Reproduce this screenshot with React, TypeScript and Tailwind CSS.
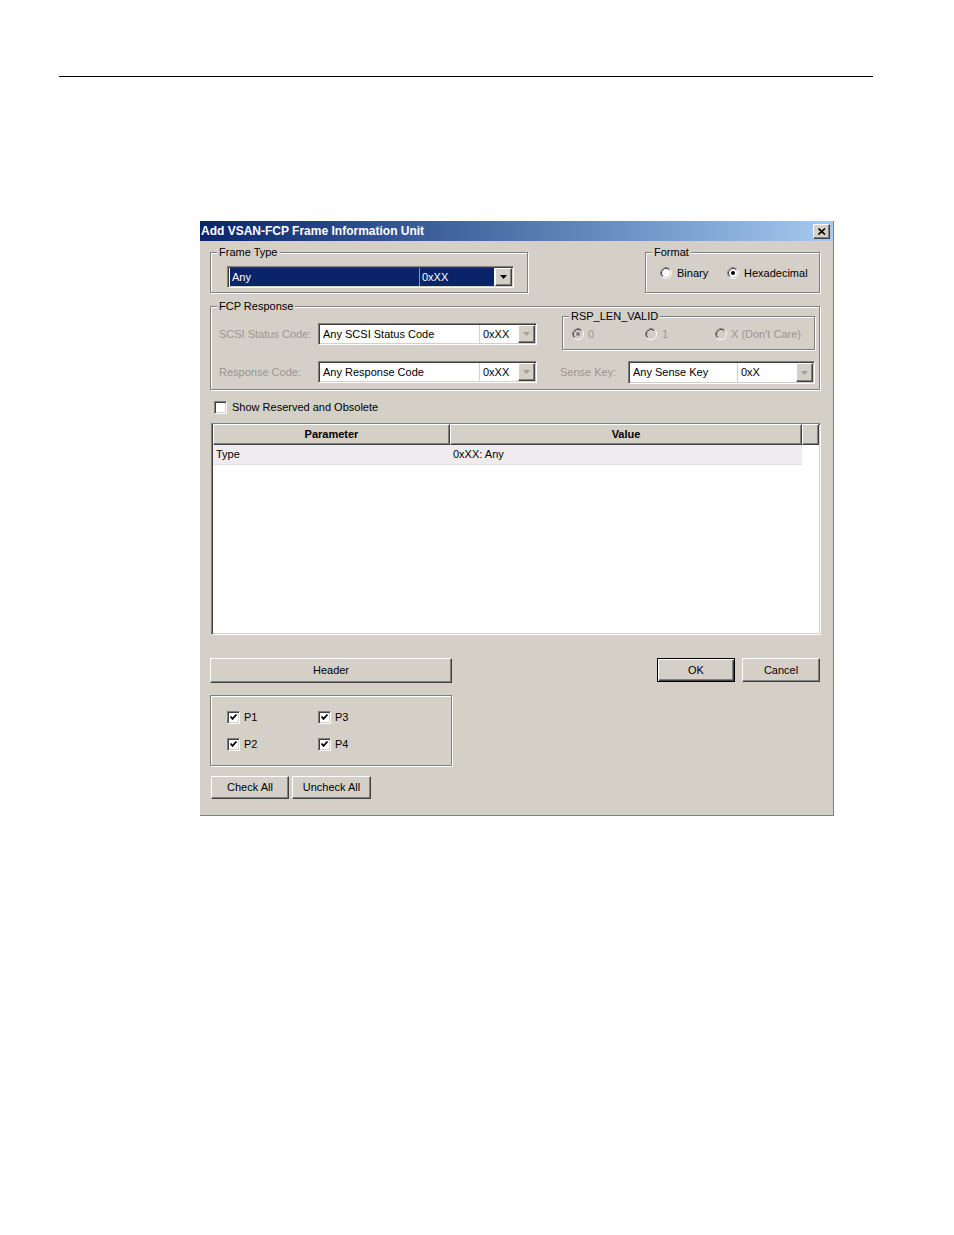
import React from "react";

const F = "font-['Liberation_Sans',Arial,sans-serif]";
const raised =
  "border border-t-white border-l-white border-r-[#404040] border-b-[#404040] shadow-[inset_-1px_-1px_0_#808080]";
const sunken =
  "border border-t-[#808080] border-l-[#808080] border-r-white border-b-white shadow-[inset_1px_1px_0_#404040,inset_-1px_-1px_0_#d4d0c8]";
const etched = "border border-[#808080] shadow-[inset_1px_1px_0_#fff,1px_1px_0_#fff]";
const dis = "text-[#9a968e]";

function Group({
  label,
  className,
  children,
}: {
  label?: string;
  className: string;
  children?: React.ReactNode;
}) {
  return (
    <div className={`relative ${etched} ${className}`}>
      {label && (
        <span className="absolute left-[6px] top-[-8px] bg-[#d4d0c8] px-[2px] text-[11px] leading-[14px] text-black">
          {label}
        </span>
      )}
      {children}
    </div>
  );
}

function Arrow({ disabled }: { disabled?: boolean }) {
  return (
    <div className={`${raised} flex w-[17px] shrink-0 items-center justify-center bg-[#d4d0c8]`}>
      <svg width="7" height="4" viewBox="0 0 7 4">
        <polygon points="0,0 7,0 3.5,4" fill={disabled ? "#a0a0a0" : "#000"} />
      </svg>
    </div>
  );
}

function Combo({
  className,
  col1,
  text,
  code,
  selected,
  disabled,
}: {
  className: string;
  col1: string;
  text: string;
  code: string;
  selected?: boolean;
  disabled?: boolean;
}) {
  if (selected) {
    return (
      <div className={`${sunken} flex bg-white py-[1px] pl-[2px] pr-[1px] ${className}`}>
        <div className="flex w-[264px] bg-[#0a246a] text-white">
          <div className={`${col1} flex items-center border-r border-[#8a94b8] pl-[2px]`}>{text}</div>
          <div className="flex flex-1 items-center pl-[2px]">{code}</div>
        </div>
        <div className="flex-1" />
        <Arrow />
      </div>
    );
  }
  return (
    <div className={`${sunken} flex bg-white py-[1px] pl-[1px] pr-[1px] ${className}`}>
      <div className={`${col1} flex items-center border-r border-[#d4d0c8] pl-[3px]`}>{text}</div>
      <div className="flex flex-1 items-center pl-[3px]">{code}</div>
      <Arrow disabled={disabled} />
    </div>
  );
}

function Radio({ checked, disabled }: { checked?: boolean; disabled?: boolean }) {
  return (
    <svg width="12" height="12" viewBox="0 0 12 12" className="shrink-0">
      <circle cx="6" cy="6" r="5.5" fill="none" stroke="#fff" />
      <path d="M9.89 2.11 A5.5 5.5 0 0 0 2.11 9.89" fill="none" stroke="#808080" />
      <circle cx="6" cy="6" r="4.5" fill={disabled ? "#d4d0c8" : "#fff"} stroke="#d4d0c8" />
      <path d="M9.18 2.82 A4.5 4.5 0 0 0 2.82 9.18" fill="none" stroke="#404040" />
      {checked && <circle cx="6" cy="6" r="2" fill={disabled ? "#808080" : "#000"} />}
    </svg>
  );
}

function Check({ checked }: { checked?: boolean }) {
  return (
    <div className={`${sunken} flex h-[13px] w-[13px] shrink-0 items-center justify-center bg-white`}>
      {checked && (
        <svg width="9" height="9" viewBox="0 0 9 9">
          <polyline points="1.5,3.5 3.5,5.8 7.5,1.5" fill="none" stroke="#000" strokeWidth="1.8" />
        </svg>
      )}
    </div>
  );
}

export default function App() {
  return (
    <div className={`h-[1235px] w-[954px] bg-white ${F} text-[11px] text-black`}>
      <div className="ml-[59px] h-[76px]" />
      <div className="ml-[59px] h-px w-[814px] bg-black" />
      <div className="ml-[200px] mt-[144px] h-[595px] w-[634px] border-b border-r border-[#808080] bg-[#d4d0c8]">
        {/* title bar */}
        <div className="flex h-[20px] items-center justify-between bg-linear-to-r from-[#0a246a] to-[#a6caf0] pl-[1px] pr-[3px]">
          <span className="text-[12px] font-bold text-white">Add VSAN-FCP Frame Information Unit</span>
          <div className={`${raised} flex h-[15px] w-[17px] items-center justify-center bg-[#d4d0c8]`}>
            <svg width="8" height="7" viewBox="0 0 8 7">
              <path d="M0.5 0.5 L7 6.5 M7 0.5 L0.5 6.5" stroke="#000" strokeWidth="1.6" />
            </svg>
          </div>
        </div>

        <div className="pl-[10px]">
          {/* row 1 */}
          <div className="mt-[11px] flex w-[610px] justify-between">
            <Group label="Frame Type" className="h-[41px] w-[318px] pl-[16px] pt-[13px]">
              <Combo className="h-[22px] w-[287px]" col1="w-[190px]" text="Any" code="0xXX" selected />
            </Group>
            <Group label="Format" className="h-[41px] w-[175px] pl-[14px] pt-[14px]">
              <div className="flex h-[12px] items-center">
                <div className="flex w-[67px] items-center">
                  <Radio />
                  <span className="ml-[5px]">Binary</span>
                </div>
                <div className="flex items-center">
                  <Radio checked />
                  <span className="ml-[5px]">Hexadecimal</span>
                </div>
              </div>
            </Group>
          </div>

          {/* FCP Response */}
          <Group label="FCP Response" className="mt-[13px] flex h-[84px] w-[610px]">
            <div className="pl-[8px]">
              <div className="mt-[16px] flex h-[22px] items-center">
                <span className={`w-[99px] ${dis}`}>SCSI Status Code:</span>
                <Combo className="h-[22px] w-[219px]" col1="w-[160px]" text="Any SCSI Status Code" code="0xXX" disabled />
              </div>
              <div className="mt-[16px] flex h-[22px] items-center">
                <span className={`w-[99px] ${dis}`}>Response Code:</span>
                <Combo className="h-[22px] w-[219px]" col1="w-[160px]" text="Any Response Code" code="0xXX" disabled />
              </div>
            </div>
            <div className="ml-[23px]">
              <Group label="RSP_LEN_VALID" className="ml-[2px] mt-[9px] h-[34px] w-[253px] pl-[9px] pt-[11px]">
                <div className={`flex h-[12px] items-center ${dis}`}>
                  <div className="flex w-[73px] items-center">
                    <Radio checked disabled />
                    <span className="ml-[4px]">0</span>
                  </div>
                  <div className="flex w-[70px] items-center">
                    <Radio disabled />
                    <span className="ml-[5px]">1</span>
                  </div>
                  <div className="flex items-center">
                    <Radio disabled />
                    <span className="ml-[4px]">X (Don't Care)</span>
                  </div>
                </div>
              </Group>
              <div className="mt-[11px] flex h-[23px] items-center">
                <span className={`w-[68px] ${dis}`}>Sense Key:</span>
                <Combo className="h-[23px] w-[187px]" col1="w-[108px]" text="Any Sense Key" code="0xX" disabled />
              </div>
            </div>
          </Group>

          {/* show reserved */}
          <div className="ml-[4px] mt-[11px] flex h-[13px] items-center">
            <Check />
            <span className="ml-[5px]">Show Reserved and Obsolete</span>
          </div>

          {/* table */}
          <div className={`${sunken} ml-[1px] mt-[9px] h-[212px] w-[610px] bg-white px-[1px] pb-[1px]`}>
            <div className="flex h-[21px] bg-[#d4d0c8] font-bold">
              <div className={`${raised} flex w-[237px] items-center justify-center`}>Parameter</div>
              <div className={`${raised} flex w-[352px] items-center justify-center`}>Value</div>
              <div className={`${raised} flex-1`} />
            </div>
            <div className="flex h-[20px] w-[589px] items-center border-b border-[#e2dee2] bg-[#efebef]">
              <div className="w-[237px] pl-[3px]">Type</div>
              <div className="pl-[3px]">0xXX: Any</div>
            </div>
          </div>

          {/* buttons row */}
          <div className="mt-[23px] flex w-[610px] items-start">
            <div className={`${raised} flex h-[25px] w-[242px] items-center justify-center`}>Header</div>
            <div className="ml-auto flex h-[24px] w-[78px] items-center justify-center border border-black shadow-[inset_1px_1px_0_#fff,inset_-1px_-1px_0_#404040,inset_-2px_-2px_0_#808080]">
              OK
            </div>
            <div className={`${raised} ml-[7px] flex h-[24px] w-[78px] items-center justify-center`}>Cancel</div>
          </div>

          {/* checkbox group */}
          <Group className="mt-[12px] h-[71px] w-[242px] pl-[16px] pt-[15px]">
            <div className="grid w-[140px] grid-cols-[91px_1fr] gap-y-[14px]">
              {["P1", "P3", "P2", "P4"].map((p) => (
                <div key={p} className="flex h-[13px] items-center">
                  <Check checked />
                  <span className="ml-[4px]">{p}</span>
                </div>
              ))}
            </div>
          </Group>

          <div className="ml-[1px] mt-[10px] flex gap-[3px]">
            <div className={`${raised} flex h-[23px] w-[78px] items-center justify-center`}>Check All</div>
            <div className={`${raised} flex h-[23px] w-[79px] items-center justify-center`}>Uncheck All</div>
          </div>
        </div>
      </div>
    </div>
  );
}
